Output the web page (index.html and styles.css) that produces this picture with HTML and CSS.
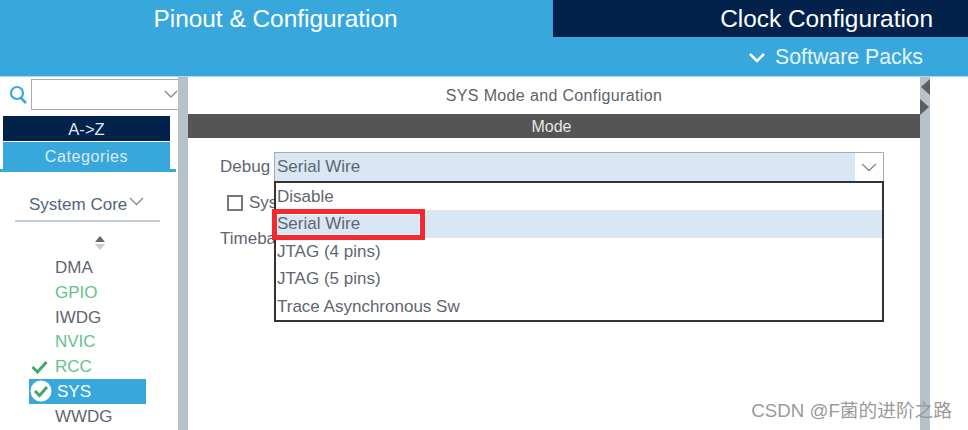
FILE: index.html
```html
<!DOCTYPE html>
<html lang="en">

<head>
    <meta charset="UTF-8">
    <meta name="viewport" content="width=device-width, initial-scale=1.0">
    <title>SYS Mode and Configuration</title>
    <link rel="stylesheet" href="styles.css">
</head>

<body>
    <div class="header">
        <div class="tabs">
            <div class="tab tab-active">Pinout &amp; Configuration</div>
            <div class="tab tab-dark">Clock Configuration</div>
        </div>
        <div class="packs">
            <svg class="packs-icon" width="18" height="12" viewBox="0 0 18 12"><path d="M2 2l7 7 7-7" fill="none" stroke="#fff" stroke-width="2.6"/></svg>
            <span>Software Packs</span>
        </div>
    </div>

    <div class="main">
        <div class="sidebar">
            <div class="search">
                <svg class="search-icon" width="19" height="20" viewBox="0 0 19 20"><circle cx="8" cy="8" r="6" fill="none" stroke="#38a8dc" stroke-width="2.2"/><path d="M12 13l5 5" stroke="#38a8dc" stroke-width="2.6"/></svg>
                <div class="search-box">
                    <svg width="14" height="9" viewBox="0 0 14 9"><path d="M1 1l6 6 6-6" fill="none" stroke="#8a8a8a" stroke-width="1.4"/></svg>
                </div>
            </div>
            <div class="sort-btn sort-dark">A-&gt;Z</div>
            <div class="sort-btn sort-blue">Categories</div>
            <div class="sort-line"></div>
            <div class="group">
                <span>System Core</span>
                <svg width="15" height="9" viewBox="0 0 15 9"><path d="M1 1l6.500 6.500L14 1" fill="none" stroke="#7f8a96" stroke-width="1.300"/></svg>
            </div>
            <div class="scroll-arrows"><i class="arrow-up"></i><i class="arrow-down"></i></div>
            <ul class="list">
                <li>DMA</li>
                <li class="green">GPIO</li>
                <li>IWDG</li>
                <li class="green">NVIC</li>
                <li class="green">
                    <svg class="check" width="17" height="14" viewBox="0 0 17 14"><path d="M1.500 7l5 5 9-10" fill="none" stroke="#3fa96b" stroke-width="3"/></svg>
                    RCC
                </li>
                <li class="selected">
                    <svg class="check-round" width="22" height="22" viewBox="0 0 22 22"><circle cx="11" cy="11" r="10.500" fill="#fff"/><path d="M5 11l4.500 4.500 7.500-8.500" fill="none" stroke="#3fa96b" stroke-width="3"/></svg>
                    SYS
                </li>
                <li>WWDG</li>
            </ul>
        </div>

        <div class="splitter"></div>

        <div class="content">
            <div class="content-title">SYS Mode and Configuration</div>
            <div class="mode-bar">Mode</div>
            <div class="form">
                <div class="form-row">
                    <label class="form-label">Debug</label>
                    <div class="select">
                        <div class="select-value">Serial Wire</div>
                        <div class="select-btn">
                            <svg width="16" height="9" viewBox="0 0 16 9"><path d="M1 1l7 6.500L15 1" fill="none" stroke="#8a8a8a" stroke-width="1.400"/></svg>
                        </div>
                    </div>
                </div>
                <div class="form-row check-row">
                    <span class="checkbox"></span>
                    <span>Sys</span>
                </div>
                <div class="form-row time-row">
                    <label class="form-label">Timeba</label>
                </div>
                <div class="menu">
                    <div class="menu-item">Disable</div>
                    <div class="menu-item menu-item-on">Serial Wire</div>
                    <div class="menu-item">JTAG (4 pins)</div>
                    <div class="menu-item">JTAG (5 pins)</div>
                    <div class="menu-item">Trace Asynchronous Sw</div>
                </div>
                <div class="red-box"></div>
            </div>
        </div>

        <div class="splitter splitter-right">
            <i class="tri-left"></i>
            <i class="tri-right"></i>
        </div>
        <div class="blank"></div>
    </div>

    <div class="watermark">CSDN @F菌的进阶之路</div>
</body>

</html>
```

FILE: styles.css
```css
body {
    margin: 0;
    width: 968px;
    height: 430px;
    overflow: hidden;
    position: relative;
    background-color: #fff;
    font-family: "Liberation Sans", Arial, sans-serif;
    color: #5f6670;
}

/* header */
.header {
    height: 77px;
    background-color: #38a8dc;
    border-bottom: 1px solid #a9d8ef;
    box-sizing: border-box;
}

.tabs {
    display: grid;
    grid-template-columns: 551px 415px;
    column-gap: 2px;
    height: 37px;
}

.tab {
    color: #fff;
    font-size: 24.4px;
    line-height: 37px;
    text-align: center;
}

.tab-active {
    background-color: #38a8dc;
}

.tab-dark {
    background-color: #02224c;
    text-align: right;
    padding-right: 35px;
}

.packs {
    display: flex;
    align-items: center;
    justify-content: flex-end;
    height: 39px;
    padding: 2px 45px 0 0;
    box-sizing: border-box;
    color: #e4f4fc;
    font-size: 21.3px;
}

.packs-icon {
    margin-right: 9px;
}

/* main area */
.main {
    display: grid;
    grid-template-columns: 178px 10px 732px 10px 38px;
    height: 353px;
}

.splitter {
    background-color: #b5c2c9;
}

.splitter-right {
    display: flex;
    flex-direction: column;
    align-items: flex-end;
    gap: 4px;
    padding-top: 2px;
}

.tri-left {
    border-top: 8px solid transparent;
    border-bottom: 8px solid transparent;
    border-right: 9px solid #5c5f60;
}

.tri-right {
    border-top: 8px solid transparent;
    border-bottom: 8px solid transparent;
    border-left: 9px solid #5c5f60;
    margin-right: 1px;
}

/* sidebar */
.sidebar {
    overflow: hidden;
}

.search {
    display: flex;
    align-items: center;
    height: 31px;
    margin-top: 2px;
    padding-left: 9px;
}

.search-icon {
    flex: none;
    margin-right: 3px;
}

.search-box {
    flex: none;
    display: flex;
    align-items: center;
    justify-content: flex-end;
    width: 155px;
    height: 31px;
    box-sizing: border-box;
    border: 1px solid #aaa;
    padding-right: 7px;
}

.sort-btn {
    margin-left: 3px;
    width: 167px;
    text-align: center;
    color: #dfe8f0;
    font-size: 16.6px;
}

.sort-dark {
    margin-top: 6px;
    height: 25px;
    line-height: 28px;
    background-color: #02224c;
}

.sort-blue {
    margin-top: 1px;
    height: 28px;
    line-height: 29px;
    background-color: #38a8dc;
    font-size: 16px;
    letter-spacing: 0.6px;
}

.sort-line {
    height: 3px;
    width: 176px;
    margin-top: -1px;
    background-color: #38a8dc;
}

.group {
    display: flex;
    align-items: center;
    width: 131px;
    height: 48px;
    margin-left: 15px;
    padding: 0 0 0 14px;
    border-bottom: 2px solid #c3ced6;
    box-sizing: content-box;
    font-size: 17px;
    color: #53647c;
}

.group span {
    white-space: nowrap;
    padding-top: 17px;
}

.group svg {
    flex: none;
    margin: 11px 0 0 2px;
}

.scroll-arrows {
    display: flex;
    flex-direction: column;
    align-items: center;
    gap: 2px;
    margin: 14px 0 0 15px;
    width: 170px;
}

.arrow-up {
    border-left: 5px solid transparent;
    border-right: 5px solid transparent;
    border-bottom: 6px solid #666;
}

.arrow-down {
    border-left: 5px solid transparent;
    border-right: 5px solid transparent;
    border-top: 6px solid #ccc;
}

.list {
    list-style: none;
    margin: 5px 0 0;
    padding: 0;
    font-size: 17px;
}

.list li {
    position: relative;
    height: 24.8px;
    line-height: 25px;
    padding-left: 55px;
    width: 91px;
}

.green {
    color: #62c38a;
}

.check {
    position: absolute;
    left: 31px;
    top: 6px;
}

.list .selected {
    margin-left: 29px;
    padding-left: 28px;
    width: 89px;
    background-color: #38a8dc;
    color: #fff;
}

.check-round {
    position: absolute;
    left: 1px;
    top: 1px;
}

/* content */
.content {
    min-width: 0;
}

.content-title {
    height: 37px;
    line-height: 37px;
    text-align: center;
    font-size: 16px;
    letter-spacing: 0.35px;
    color: #5f6368;
}

.mode-bar {
    height: 24px;
    line-height: 25px;
    padding-right: 5px;
    text-align: center;
    font-size: 16px;
    background-color: #545554;
    color: #e8e8e8;
}

.form {
    position: relative;
    padding: 14px 0 0 32px;
    font-size: 17px;
}

.form-row {
    display: flex;
    align-items: center;
}

.form-label {
    width: 54px;
}

.select {
    display: flex;
    width: 610px;
    height: 29px;
    box-sizing: border-box;
    border: 1px solid #aaa;
    border-bottom: 0;
}

.select-value {
    flex: 1;
    padding-left: 2px;
    line-height: 28px;
    background-color: #d9e7f4;
}

.select-btn {
    display: flex;
    align-items: center;
    justify-content: center;
    width: 28px;
}

.check-row {
    margin: 14px 0 0 7px;
    height: 16px;
    gap: 6px;
}

.checkbox {
    width: 16px;
    height: 16px;
    box-sizing: border-box;
    border: 2px solid #777;
}

.time-row {
    margin-top: 18px;
    height: 20px;
}

.menu {
    position: absolute;
    left: 86px;
    top: 43px;
    width: 610px;
    height: 141px;
    box-sizing: border-box;
    border: 2px solid #333;
    background-color: #fff;
}

.menu-item {
    height: 27.400px;
    line-height: 28px;
    padding-left: 1px;
}

.menu-item-on {
    background-color: #d9e7f4;
}

.red-box {
    position: absolute;
    left: 84px;
    top: 71px;
    width: 153px;
    height: 31px;
    box-sizing: border-box;
    border: 5px solid #f5282f;
    outline: 1px solid #fff;
    outline-offset: -6px;
}

.watermark {
    position: absolute;
    right: 16px;
    bottom: 8px;
    color: #9a9a9a;
    font-size: 18.7px;
    font-family: "Liberation Sans", "Noto Sans CJK SC", sans-serif;
}
```
